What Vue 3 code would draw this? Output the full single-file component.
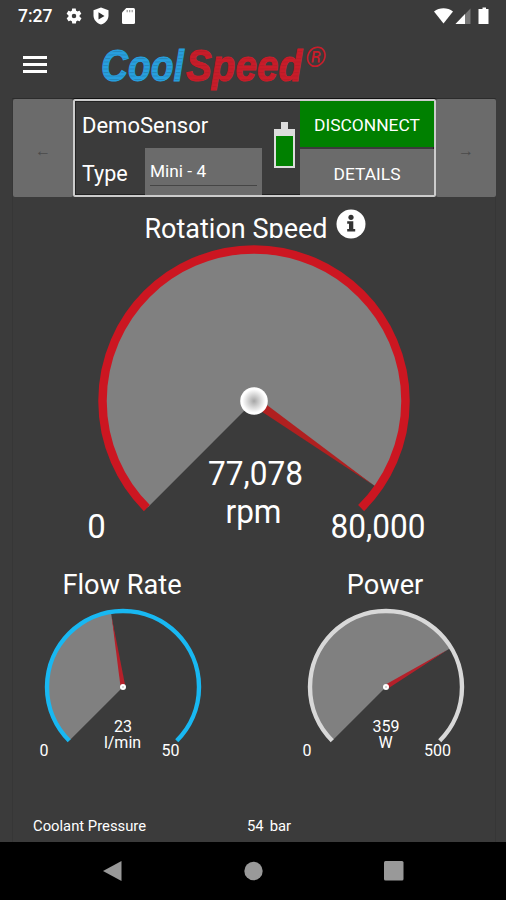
<template>
  <div class="screen">
    <header class="status-bar">
      <span class="clock">7:27</span>
      <div class="status-icons">
        <svg class="status-icon" width="18" height="18" viewBox="0 0 24 24">
          <path
            fill="#fff"
            d="M19.4 13c0-.3.1-.6.1-1s0-.7-.1-1l2.1-1.6c.2-.2.3-.4.1-.7l-2-3.4c-.1-.2-.4-.3-.6-.2l-2.5 1c-.5-.4-1.1-.7-1.7-1l-.4-2.6c0-.2-.2-.4-.5-.4h-4c-.2 0-.4.2-.5.4L9.1 5.1c-.6.3-1.1.6-1.7 1l-2.5-1c-.2-.1-.5 0-.6.2l-2 3.4c-.1.2-.1.5.1.7L4.6 11c0 .3-.1.6-.1 1s0 .7.1 1l-2.1 1.6c-.2.2-.3.4-.1.7l2 3.4c.1.2.4.3.6.2l2.5-1c.5.4 1.1.7 1.7 1l.4 2.6c0 .2.2.4.5.4h4c.2 0 .4-.2.5-.4l.4-2.6c.6-.3 1.1-.6 1.7-1l2.5 1c.2.1.5 0 .6-.2l2-3.4c.1-.2.1-.5-.1-.7L19.4 13zM12 15a3 3 0 1 1 0-6 3 3 0 0 1 0 6z"
          />
        </svg>
        <svg class="status-icon" width="18" height="18" viewBox="0 0 18 18">
          <path fill="#fff" d="M9 .5L16.5 3.3V8.5C16.5 12.8 13.3 16.2 9 17.5C4.7 16.2 1.5 12.8 1.5 8.5V3.3Z" />
          <path fill="#303030" d="M6.5 5.2L12.5 9L6.5 12.6Z" />
        </svg>
        <svg class="status-icon" width="18" height="18" viewBox="0 0 18 18">
          <path fill="#fff" d="M7.3 1H14.5Q16 1 16 2.5V15.5Q16 17 14.5 17H4.5Q3 17 3 15.5V5.5Z" />
          <path stroke="#999" stroke-width="1.2" d="M8.2 3V5.2M10.7 3V5.2M13.2 3V5.2" />
        </svg>
      </div>
      <svg class="signal-icons" width="60" height="20" viewBox="0 0 60 20">
        <path fill="#fff" d="M1 5.5C6.5 1.2 14.5 1.2 20 5.5L10.5 17.5Z" />
        <path fill="#777" d="M37.5 2.5V18H22.5Z" />
        <path fill="#fff" d="M32 8V18H22.5Z" />
        <path fill="#fff" d="M47.5 3H49.5V1.5H53V3H55.5V18H45.5V3Z" />
      </svg>
    </header>

    <div class="app-bar">
      <button class="menu-button" aria-label="Menu">
        <span></span>
        <span></span>
        <span></span>
      </button>
      <svg class="logo" width="240" height="60" viewBox="0 0 240 60">
        <defs>
          <pattern id="blueStripes" width="4" height="3.5" patternUnits="userSpaceOnUse">
            <rect width="4" height="3.5" fill="#27a0df" />
            <rect width="4" height="1" fill="#2786b8" />
          </pattern>
          <pattern id="redStripes" width="4" height="3.5" patternUnits="userSpaceOnUse">
            <rect width="4" height="3.5" fill="#c91c29" />
            <rect width="4" height="1" fill="#b91c28" />
          </pattern>
        </defs>
        <text class="logo-text" x="6" y="43.5" fill="url(#blueStripes)" stroke="#27a0df" textLength="83" lengthAdjust="spacingAndGlyphs">Cool</text>
        <text class="logo-text" x="91" y="43.5" fill="url(#redStripes)" stroke="#c91c29" textLength="116" lengthAdjust="spacingAndGlyphs">Speed</text>
        <text class="logo-mark" x="210" y="29.5" fill="#c91c29">®</text>
      </svg>
    </div>

    <main class="content">
      <section class="sensor-row">
        <button class="step-button">←</button>
        <div class="sensor-card">
          <div class="sensor-info">
            <div class="sensor-name">DemoSensor</div>
            <div class="type-row">
              <span class="type-label">Type</span>
              <div class="type-select"><span>Mini - 4</span></div>
            </div>
          </div>
          <div class="battery">
            <span class="battery-tip"></span>
            <span class="battery-body"><span class="battery-level"></span></span>
          </div>
          <div class="sensor-actions">
            <button class="action connect">DISCONNECT</button>
            <button class="action details">DETAILS</button>
          </div>
        </div>
        <button class="step-button">→</button>
      </section>

      <section class="main-gauge">
        <div class="main-title">
          <h1>Rotation Speed</h1>
          <svg class="info-icon" width="30" height="30" viewBox="0 0 30 30">
            <circle cx="15" cy="15" r="14.5" fill="#fff" />
            <circle cx="15" cy="8.3" r="2.6" fill="#333" />
            <path fill="#333" d="M11.2 12.3H17.3V20H19.2V22.5H11.2V20H13V14.8H11.2Z" />
          </svg>
        </div>
        <svg class="dial" width="482" height="310" viewBox="0 0 482 310">
          <defs>
            <radialGradient id="hubShade">
              <stop offset="0" stop-color="#a6a6a6" />
              <stop offset="0.85" stop-color="#fff" />
            </radialGradient>
          </defs>
          <path :d="sector(main)" fill="#808080" />
          <path :d="arc(main)" fill="none" stroke="#cc1621" stroke-width="8.5" />
          <path :d="needle(main)" fill="#b02020" />
          <circle :cx="main.cx" :cy="main.cy" r="13.8" fill="url(#hubShade)" />
          <g class="main-text">
            <text x="242.5" y="245.5" textLength="95" lengthAdjust="spacingAndGlyphs">77,078</text>
            <text x="240.5" y="283.5" textLength="56" lengthAdjust="spacingAndGlyphs">rpm</text>
            <text x="83.5" y="298.5">0</text>
            <text x="365" y="298.5" textLength="95" lengthAdjust="spacingAndGlyphs">80,000</text>
          </g>
        </svg>
      </section>

      <section class="small-gauges">
        <div v-for="g in gauges" :key="g.title" class="small-gauge">
          <h2>{{ g.title }}</h2>
          <svg class="dial" width="220" height="170" viewBox="0 0 220 170">
            <path :d="sector(g)" fill="#808080" />
            <path :d="arc(g)" fill="none" :stroke="g.color" stroke-width="4.4" />
            <path :d="needle(g)" fill="#b5202a" />
            <circle :cx="g.cx" :cy="g.cy" r="3" fill="#fff" />
            <circle :cx="g.cx" :cy="g.cy" r="1" fill="#ccc" />
            <g class="small-text">
              <text x="110" y="128.5">{{ g.value }}</text>
              <text x="109.5" y="144.5">{{ g.unit }}</text>
              <text x="31" y="153">0</text>
              <text :x="g.maxX" y="153">{{ g.max }}</text>
            </g>
          </svg>
        </div>
      </section>

      <section class="reading">
        <span class="reading-label">Coolant Pressure</span>
        <span class="reading-value">54</span>
        <span class="reading-unit">bar</span>
      </section>
    </main>

    <nav class="nav-bar">
      <svg width="20" height="22" viewBox="0 0 20 22"><path fill="#999" d="M19.5 1V21L1 11Z" /></svg>
      <svg width="20" height="20" viewBox="0 0 20 20"><circle cx="10.5" cy="10" r="9.2" fill="#999" /></svg>
      <svg width="20" height="20" viewBox="0 0 20 20"><rect width="19.5" height="19.5" rx="1.5" fill="#999" /></svg>
    </nav>
  </div>
</template>

<script setup>
import { ref } from 'vue';

const main = ref({ value: 77078, max: 80000, cx: 241, cy: 162, r: 151.5, needleBase: 4.6 });

const gauges = ref([
  { title: 'Flow Rate', value: 23, sweep: 23.3, max: 50, unit: 'l/min', color: '#18b8f2', cx: 110, cy: 84, r: 76, needleBase: 2.4, maxX: 157.5 },
  { title: 'Power', value: 359, max: 500, unit: 'W', color: '#d8d8d8', cx: 110, cy: 84, r: 76, needleBase: 2.4, maxX: 161.5 },
]);

// The scale runs clockwise over 270 degrees, from lower left to lower right
const angleOf = (fraction) => ((225 - fraction * 270) * Math.PI) / 180;

const point = (g, radius, angle) => ({
  x: g.cx + radius * Math.cos(angle),
  y: g.cy - radius * Math.sin(angle),
});

const fractionOf = (g) => (g.sweep ?? g.value) / g.max;

const arc = (g) => {
  const a = point(g, g.r, angleOf(0));
  const b = point(g, g.r, angleOf(1));
  return `M${a.x} ${a.y}A${g.r} ${g.r} 0 1 1 ${b.x} ${b.y}`;
};

const sector = (g) => {
  const fraction = fractionOf(g);
  const radius = g.r - 1;
  const a = point(g, radius, angleOf(0));
  const b = point(g, radius, angleOf(fraction));
  const large = fraction * 270 > 180 ? 1 : 0;
  return `M${g.cx} ${g.cy}L${a.x} ${a.y}A${radius} ${radius} 0 ${large} 1 ${b.x} ${b.y}Z`;
};

const needle = (g) => {
  const angle = angleOf(fractionOf(g));
  const tip = point(g, g.r - 4, angle);
  const left = point(g, g.needleBase, angle + Math.PI / 2);
  const right = point(g, g.needleBase, angle - Math.PI / 2);
  return `M${left.x} ${left.y}L${tip.x} ${tip.y}L${right.x} ${right.y}Z`;
};
</script>

<style>
body {
  margin: 0;
  background: #000;
}
</style>

<style scoped>
.screen {
  display: flex;
  flex-direction: column;
  width: 506px;
  height: 900px;
  overflow: hidden;
  background: #3b3b3b;
  color: #fff;
  font-family: Roboto, "Liberation Sans", sans-serif;
}
button {
  margin: 0;
  padding: 0;
  border: 0;
  font-family: inherit;
}
.status-bar {
  display: flex;
  align-items: center;
  height: 32px;
  padding: 0 13px 0 18px;
  box-sizing: border-box;
}
.clock {
  width: 47px;
  font-size: 17.5px;
  font-weight: 500;
}
.status-icons {
  display: flex;
  gap: 9px;
}
.status-icon {
  display: block;
}
.signal-icons {
  margin-left: auto;
}
.app-bar {
  display: flex;
  align-items: center;
  height: 66px;
  padding: 0 0 1px 23px;
  box-sizing: border-box;
}
.menu-button {
  display: flex;
  flex-direction: column;
  gap: 4px;
  width: 24px;
  background: none;
}
.menu-button span {
  height: 3px;
  background: #fff;
}
.logo {
  margin: 4px 0 0 48px;
}
.logo-text {
  font-family: "Liberation Sans", Roboto, sans-serif;
  font-size: 45px;
  font-weight: 700;
  font-style: italic;
  stroke-width: 1px;
}
.logo-mark {
  font-size: 28px;
  font-style: italic;
}
.content {
  flex: 1;
  display: flex;
  flex-direction: column;
  margin: 0 10px 0 12px;
  border-left: 1px solid #363636;
  border-right: 1px solid #363636;
  border-top: 1px solid #2c2c2c;
  box-sizing: border-box;
}
.sensor-row {
  display: flex;
  width: 483px;
  height: 98px;
}
.step-button {
  width: 60px;
  padding-top: 5px;
  border-radius: 2px;
  background: #6b6b6b;
  color: #4a4a4a;
  font-size: 16px;
}
.sensor-card {
  flex: 1;
  display: flex;
  border: 2px solid #ccc;
  border-radius: 2px;
  box-sizing: border-box;
  box-shadow: 0 -1px #111, inset 0 0 0 1px #222;
}
.sensor-info {
  display: flex;
  flex-direction: column;
  width: 187px;
}
.sensor-name {
  height: 47px;
  padding-left: 7px;
  font-size: 22px;
  line-height: 50px;
}
.type-row {
  display: flex;
  justify-content: space-between;
  height: 47px;
  padding-left: 7px;
}
.type-label {
  font-size: 21.5px;
  line-height: 52px;
}
.type-select {
  width: 117px;
  padding: 0 5px;
  box-sizing: border-box;
  background: #6b6b6b;
  font-size: 17.3px;
}
.type-select span {
  display: block;
  height: 37px;
  border-bottom: 1px solid #454545;
  line-height: 47px;
}
.battery {
  display: flex;
  flex-direction: column;
  align-items: center;
  width: 21px;
  margin: 21px 5px 0 12px;
}
.battery-tip {
  width: 7px;
  height: 7px;
  background: #ddd;
}
.battery-body {
  display: flex;
  align-items: flex-end;
  width: 21px;
  height: 39px;
  padding: 2px;
  box-sizing: border-box;
  background: #ddd;
}
.battery-level {
  width: 100%;
  height: 30px;
  background: #008000;
}
.sensor-actions {
  flex: 1;
  display: flex;
  flex-direction: column;
  gap: 2px;
}
.action {
  height: 46px;
  color: #fff;
  font-size: 17.4px;
}
.connect {
  padding-top: 2px;
  background: #008000;
}
.details {
  padding-top: 4px;
  background: #6b6b6b;
}
.main-title {
  display: flex;
  justify-content: center;
  height: 42px;
  padding-left: 2px;
  overflow: hidden;
}
h1,
h2 {
  margin: 0;
  font-weight: 400;
}
h1 {
  height: 41px;
  overflow: hidden;
  font-size: 27px;
  line-height: 65px;
  white-space: nowrap;
}
.info-icon {
  margin: 12px 0 0 8px;
}
.dial {
  display: block;
}
.main-text {
  fill: #fff;
  font-size: 33px;
  text-anchor: middle;
}
.small-gauges {
  display: flex;
  gap: 43px;
  height: 218px;
  margin-top: 16px;
}
.small-gauge {
  width: 220px;
}
h2 {
  width: 218px;
  height: 38px;
  font-size: 27.2px;
  line-height: 40px;
  text-align: center;
}
.small-text {
  fill: #fff;
  font-size: 16px;
  text-anchor: middle;
}
.reading {
  display: flex;
  padding: 32px 0 0 20px;
  font-size: 14.8px;
  line-height: 22px;
}
.reading-label {
  width: 214px;
}
.reading-value {
  margin-right: 6px;
}
.nav-bar {
  display: flex;
  align-items: center;
  justify-content: space-between;
  height: 58px;
  padding: 0 102px;
  box-sizing: border-box;
  background: #000;
}
</style>
